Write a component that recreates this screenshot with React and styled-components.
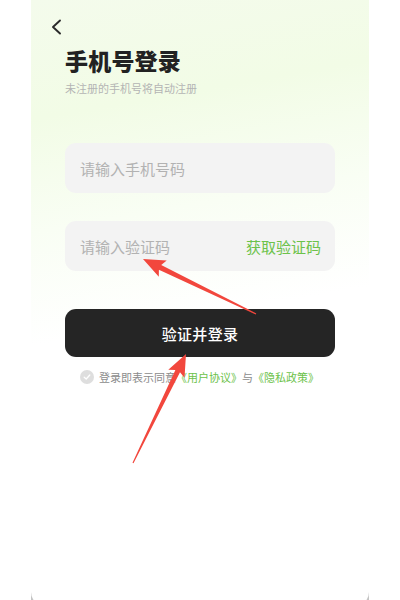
import React from 'react';
import styled, { createGlobalStyle } from 'styled-components';

const GlobalStyle = createGlobalStyle`
  html, body {
    margin: 0;
    padding: 0;
    background: #ffffff;
  }
  body {
    font-family: "Noto Sans CJK SC", "Noto Sans", sans-serif;
  }
`;

const Page = styled.div`
  position: relative;
  width: 400px;
  height: 600px;
  overflow: hidden;
  background: #ffffff;
`;

const Frame = styled.div`
  margin: 0 31px;
  height: 600px;
  overflow: hidden;
  background: #c4c4c4;
`;

const Screen = styled.div`
  height: 606px;
  box-sizing: border-box;
  padding: 19px 34px 0;
  border-radius: 0 0 14px 14px;
  background: linear-gradient(170deg, #f4fbec 0%, #f2fce6 18%, #f9fef4 35%, #ffffff 52%);
  display: flex;
  flex-direction: column;
`;

const BackButton = styled.button`
  margin-left: -15px;
  padding: 0;
  border: none;
  background: none;
  width: 12px;
  height: 16px;
  cursor: pointer;

  svg {
    display: block;
  }
`;

const Title = styled.h1`
  margin: 11px 0 0;
  font-size: 23px;
  line-height: 28px;
  font-weight: 900;
  color: #222222;
  letter-spacing: 0.2px;
`;

const Subtitle = styled.p`
  margin: 6px 0 0;
  font-size: 11px;
  line-height: 16px;
  color: #b4b4b4;
`;

const Form = styled.div`
  margin-top: 47px;
  display: flex;
  flex-direction: column;
`;

const Field = styled.div`
  height: 50px;
  border-radius: 11px;
  background: #f3f3f3;
  display: flex;
  align-items: center;
  padding: 0 14px 0 15px;
  margin-bottom: ${(p) => p.$gap}px;
`;

const Input = styled.input`
  flex: 1;
  min-width: 0;
  border: none;
  outline: none;
  background: transparent;
  padding: 0;
  font-family: inherit;
  font-size: 15px;
  color: #333333;

  &::placeholder {
    color: #b2b2b2;
  }
`;

const CodeButton = styled.button`
  border: none;
  background: none;
  padding: 0;
  font-family: inherit;
  font-size: 15px;
  color: #6cc24a;
  cursor: pointer;
`;

const SubmitButton = styled.button`
  height: 48px;
  border: none;
  border-radius: 11px;
  background: #252525;
  color: #ffffff;
  font-family: inherit;
  font-size: 15px;
  font-weight: 500;
  letter-spacing: 0.3px;
  cursor: pointer;
`;

const Agreement = styled.div`
  margin-top: 13px;
  padding-left: 15px;
  display: flex;
  align-items: center;
  gap: 5px;
  font-size: 11px;
  line-height: 14px;
  color: #8c8c8c;
  white-space: nowrap;
`;

const Check = styled.span`
  width: 14px;
  height: 14px;
  border-radius: 50%;
  background: #dedede;
  display: flex;
  align-items: center;
  justify-content: center;
`;

const Link = styled.span`
  color: #6cc24a;
`;

const Overlay = styled.svg`
  position: absolute;
  left: 0;
  top: 0;
  pointer-events: none;
`;

const arrowPoints = (tip, tail, headLen = 22, headHalf = 9, neckHalf = 2.6, tailHalf = 0.6) => {
  const dx = tail[0] - tip[0];
  const dy = tail[1] - tip[1];
  const len = Math.hypot(dx, dy);
  const ux = dx / len;
  const uy = dy / len;
  const px = -uy;
  const py = ux;
  const bx = tip[0] + ux * headLen;
  const by = tip[1] + uy * headLen;
  const pts = [
    tip,
    [bx + px * headHalf, by + py * headHalf],
    [bx + px * neckHalf - ux * 3, by + py * neckHalf - uy * 3],
    [tail[0] + px * tailHalf, tail[1] + py * tailHalf],
    [tail[0] - px * tailHalf, tail[1] - py * tailHalf],
    [bx - px * neckHalf - ux * 3, by - py * neckHalf - uy * 3],
    [bx - px * headHalf, by - py * headHalf],
  ];
  return pts.map((p) => `${p[0].toFixed(1)},${p[1].toFixed(1)}`).join(' ');
};

export default function App() {
  return (
    <>
      <GlobalStyle />
      <Page>
        <Frame>
          <Screen>
            <BackButton aria-label="返回">
              <svg width="12" height="16" viewBox="0 0 12 16">
                <path d="M10 1.5 L3 8 L10 14.5" fill="none" stroke="#2a2a2a" strokeWidth="1.9" strokeLinecap="round" strokeLinejoin="round" />
              </svg>
            </BackButton>
            <Title>手机号登录</Title>
            <Subtitle>未注册的手机号将自动注册</Subtitle>
            <Form>
              <Field $gap={28}>
                <Input placeholder="请输入手机号码" />
              </Field>
              <Field $gap={38}>
                <Input placeholder="请输入验证码" />
                <CodeButton>获取验证码</CodeButton>
              </Field>
              <SubmitButton>验证并登录</SubmitButton>
            </Form>
            <Agreement>
              <Check>
                <svg width="8" height="8" viewBox="0 0 8 8">
                  <path d="M1.2 4.2 L3.2 6 L6.8 2" fill="none" stroke="#ffffff" strokeWidth="1.3" strokeLinecap="round" strokeLinejoin="round" />
                </svg>
              </Check>
              <span>
                登录即表示同意<Link>《用户协议》</Link>与<Link>《隐私政策》</Link>
              </span>
            </Agreement>
          </Screen>
        </Frame>
        <Overlay width="400" height="600" viewBox="0 0 400 600">
          <polygon points={arrowPoints([143, 259], [256, 314])} fill="#f2473d" />
          <polygon points={arrowPoints([186, 354], [133, 463])} fill="#f2473d" />
        </Overlay>
      </Page>
    </>
  );
}
